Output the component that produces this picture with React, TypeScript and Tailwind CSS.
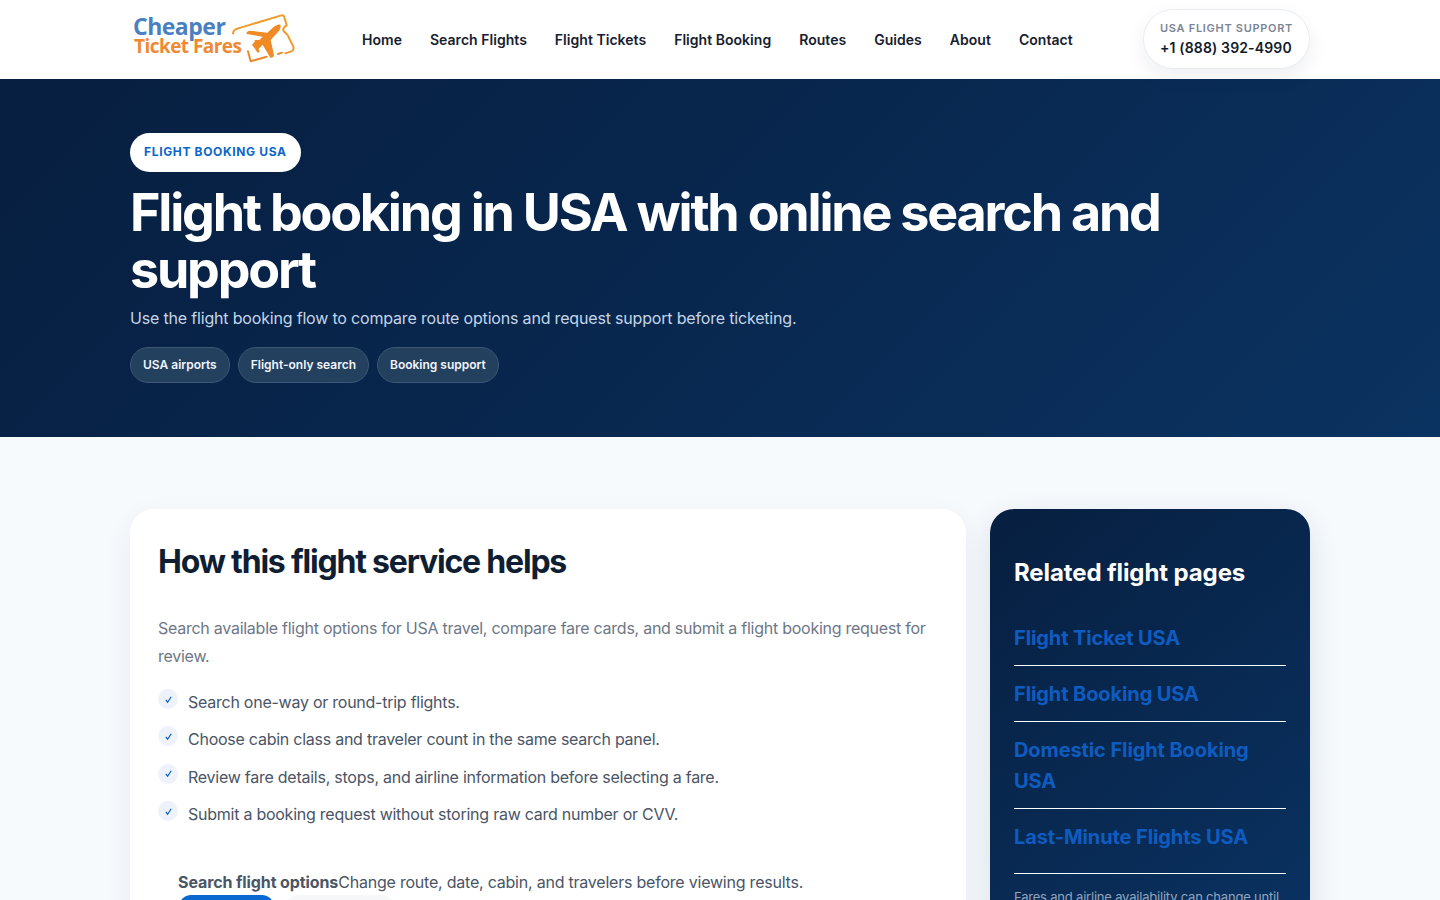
import React from "react";

const font = "font-['Inter','Noto_Sans',sans-serif]";

function Logo() {
  return (
    <div className="relative w-[170px] h-[60px] shrink-0 pt-[6px] pl-[3px] font-['Open_Sans',sans-serif] font-bold">
      <div className="text-[23px] leading-[20px] tracking-[-0.5px] text-[#4a7fc0]">Cheaper</div>
      <div className="ml-[1px] text-[19px] leading-[20px] tracking-[-0.55px] text-[#ee8a33] whitespace-nowrap">Ticket Fares</div>
      <svg className="absolute left-[98px] top-0" width="72" height="60" viewBox="0 0 216 180" fill="none">
        <path d="M15 70 C16 62 20 58 28 56 L160 16 C166 14 168 18 169 22 L176 46 C164 52 162 62 172 68 C178 72 181 78 184 86 L196 110 C198 118 196 122 190 124 L172 130" stroke="#f09a2b" strokeWidth="6" strokeLinejoin="round" strokeLinecap="round" />
        <path d="M60 124 L68 154 L116 140" stroke="#ec8a2e" strokeWidth="6" strokeLinejoin="round" strokeLinecap="round" />
        <path d="M150 132 L162 128" stroke="#ec8a2e" strokeWidth="6" strokeLinecap="round" />
        <path d="M156 44 C160 46 158 56 152 64 L128 90 L138 136 C138 142 130 146 126 142 L104 104 L92 116 L95 125 L89 128 L72 104 L82 92 L76 90 L94 90 L104 80 L56 72 C54 66 60 62 66 62 L118 68 L136 52 C142 47 150 42 156 44 Z" fill="#f08a24" />
      </svg>
    </div>
  );
}

const nav = ["Home", "Search Flights", "Flight Tickets", "Flight Booking", "Routes", "Guides", "About", "Contact"];
const chips = ["USA airports", "Flight-only search", "Booking support"];
const list = [
  "Search one-way or round-trip flights.",
  "Choose cabin class and traveler count in the same search panel.",
  "Review fare details, stops, and airline information before selecting a fare.",
  "Submit a booking request without storing raw card number or CVV.",
];
const links = [
  { t: "Flight Ticket USA", c: "pt-[12px] pb-[11px]" },
  { t: "Flight Booking USA", c: "pt-[13px] pb-[11px]" },
  { t: "Domestic Flight Booking USA", c: "pt-[13px] pb-[11px]" },
  { t: "Last-Minute Flights USA", c: "pt-[13px] pb-[20px]" },
];

export default function App() {
  return (
    <div className={`${font} h-[900px] overflow-hidden bg-[#f6fafd]`}>
      <header className="h-[79px] bg-white flex justify-center">
        <div className="w-[1180px] flex items-center">
          <Logo />
          <nav className="ml-[62px] flex gap-[28px]">
            {nav.map((n) => (
              <a key={n} className="text-[14px] leading-[20px] font-semibold text-[#17202e] tracking-[0.03px] whitespace-nowrap">{n}</a>
            ))}
          </nav>
          <div className="ml-auto mb-[1px] w-[167px] h-[60px] rounded-full bg-white border border-[#e9edf3] shadow-[0_8px_20px_rgba(15,35,70,0.07)] pl-[16px] pt-[10px]">
            <div className="text-[11px] leading-[16px] font-semibold tracking-[0.7px] text-[#7b8594] whitespace-nowrap">USA FLIGHT SUPPORT</div>
            <div className="mt-[1px] text-[14px] leading-[22px] font-semibold tracking-[0.15px] text-[#111a2b] whitespace-nowrap">+1 (888) 392-4990</div>
          </div>
        </div>
      </header>

      <section className="h-[358px] bg-[linear-gradient(135deg,#071f40_0%,#08264d_45%,#0b3361_100%)] flex justify-center">
        <div className="w-[1180px] pt-[54px]">
          <div className="inline-flex h-[39px] items-center pb-[1px] px-[14px] rounded-full bg-white text-[#0b66cc] text-[12px] font-bold tracking-[0.65px]">FLIGHT BOOKING USA</div>
          <h1 className="mt-[12px] text-[52px] leading-[57px] font-bold tracking-[-2.2px] text-white w-[1100px]">Flight booking in USA with online search and support</h1>
          <p className="mt-[8px] text-[16px] leading-[24px] text-[#c5d5e8] tracking-[-0.18px]">Use the flight booking flow to compare route options and request support before ticketing.</p>
          <div className="mt-[17px] flex gap-[8px]">
            {chips.map((c) => (
              <span key={c} className="h-[36px] px-[12px] flex items-center rounded-full bg-[#24405f] border border-[#3c5674] text-[12px] font-semibold tracking-[0px] text-[#f1f5fa] whitespace-nowrap">{c}</span>
            ))}
          </div>
        </div>
      </section>

      <main className="flex justify-center pt-[72px]">
        <div className="w-[1180px] flex gap-[24px] items-start">
          <section className="w-[836px] h-[500px] bg-white rounded-[24px] shadow-[0_10px_30px_rgba(15,35,70,0.06)] pl-[28px] pt-[31px] pr-[29px]">
            <h2 className="text-[32px] leading-[44px] font-bold tracking-[-1.2px] text-[#0f1e33]">How this flight service helps</h2>
            <p className="mt-[30px] text-[16px] leading-[28px] tracking-[-0.26px] text-[#6d7787]">Search available flight options for USA travel, compare fare cards, and submit a flight booking request for review.</p>
            <ul className="mt-[15px] flex flex-col">
              {list.map((l) => (
                <li key={l} className="h-[37.4px] flex items-start">
                  <span className="w-[20px] h-[20px] mt-[4px] rounded-full bg-[#edf2fb] flex items-center justify-center shrink-0">
                    <svg width="9" height="9" viewBox="0 0 10 10" fill="none"><path d="M2 5.5 L4 8 L8 2" stroke="#0b5cb5" strokeWidth="1.3" /></svg>
                  </span>
                  <span className="ml-[10px] mt-[5px] text-[16px] leading-[24px] tracking-[-0.25px] text-[#4a5566] whitespace-nowrap">{l}</span>
                </li>
              ))}
            </ul>
            <div className="mt-[35px] pl-[20px] text-[16px] leading-[24px] text-[#4a5566] whitespace-nowrap">
              <span className="font-bold tracking-[-0.1px]">Search flight options</span>
              <span className="tracking-[-0.22px]">Change route, date, cabin, and travelers before viewing results.</span>
            </div>
            <div className="ml-[21px] mt-[1px] flex gap-[12px]">
              <div className="w-[95px] h-[30px] rounded-[12px] bg-[#0a68d0]" />
              <div className="w-[108px] h-[30px] rounded-[12px] bg-[#f6f7f9]" />
            </div>
          </section>

          <aside className="w-[320px] h-[500px] rounded-[24px] bg-[linear-gradient(140deg,#071f40_0%,#0a3465_100%)] shadow-[0_10px_30px_rgba(15,35,70,0.12)] px-[24px] pt-[46px]">
            <h3 className="text-[24px] leading-[36px] font-bold tracking-[-0.1px] text-white">Related flight pages</h3>
            <div className="mt-[20px]">
              {links.map((l) => (
                <div key={l.t} className={`border-b border-white ${l.c}`}>
                  <a className="text-[20px] leading-[31px] font-bold tracking-[-0.1px] text-[#0f5cc0]">{l.t}</a>
                </div>
              ))}
            </div>
            <p className="mt-[13px] text-[13px] leading-[20px] text-[#93a5bc] tracking-[-0.2px]">Fares and airline availability can change until ticketing.</p>
          </aside>
        </div>
      </main>
    </div>
  );
}
